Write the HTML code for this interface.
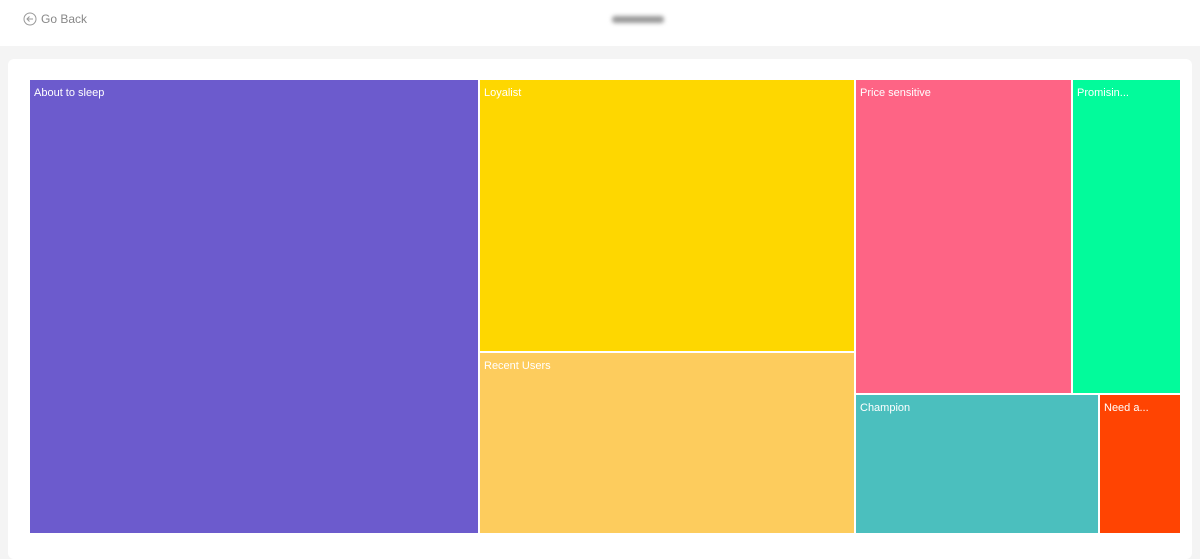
<!DOCTYPE html>
<html><head><style>
body{margin:0;width:1200px;height:548px;background:#f4f4f4;font-family:"Liberation Sans",sans-serif;position:relative;overflow:hidden}
.hdr{position:absolute;left:0;top:0;width:1200px;height:46px;background:#fff}
.card{position:absolute;left:8px;top:59px;width:1184px;height:500px;background:#fff;border-radius:6px}
.r{position:absolute;color:#fff;font-size:11px;box-sizing:border-box;padding:7px 0 0 4px;overflow:hidden;white-space:nowrap}
</style></head><body>
<div class="hdr">
<svg style="position:absolute;left:23px;top:12px" width="14" height="14" viewBox="0 0 14 14"><circle cx="7" cy="7" r="6" fill="none" stroke="#999" stroke-width="1"/><path d="M10 7H4M6.5 4.5L4 7l2.5 2.5" fill="none" stroke="#999" stroke-width="1"/></svg>
<div style="position:absolute;left:41px;top:12px;font-size:12px;color:#888">Go Back</div>
<div style="position:absolute;left:612px;top:16px;width:52px;height:7px;background:#999;filter:blur(2px);border-radius:3px"></div>
</div>
<div class="card"></div>
<div class="r" style="left:30px;top:80px;width:448px;height:453px;background:#6c5bcd">About to sleep</div>
<div class="r" style="left:480px;top:80px;width:374px;height:271px;background:#fed700">Loyalist</div>
<div class="r" style="left:480px;top:353px;width:374px;height:180px;background:#fdcc5d">Recent Users</div>
<div class="r" style="left:856px;top:80px;width:215px;height:313px;background:#fe6485">Price sensitive</div>
<div class="r" style="left:1073px;top:80px;width:107px;height:313px;background:#02fb9b">Promisin...</div>
<div class="r" style="left:856px;top:395px;width:242px;height:138px;background:#4bbfbe">Champion</div>
<div class="r" style="left:1100px;top:395px;width:80px;height:138px;background:#ff4402">Need a...</div>
</body></html>
